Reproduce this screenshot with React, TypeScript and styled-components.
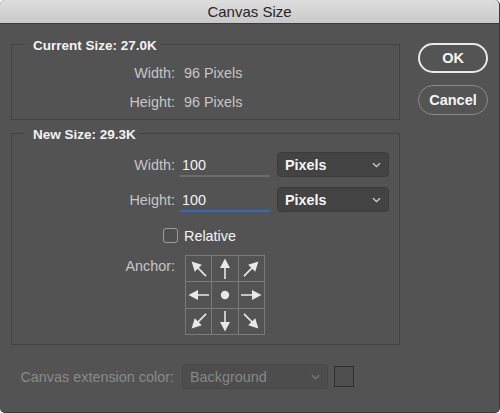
import styled, { createGlobalStyle } from "styled-components";

const GlobalStyle = createGlobalStyle`
    body {
        margin: 0;
        background: #ffffff;
        font-family: "Liberation Sans", Arial, sans-serif;
    }
`;

const Window = styled.div`
    width: 499px;
    height: 412px;
    background: #535353;
    border-right: 1px solid #3a3a3a;
    border-bottom: 1px solid #3a3a3a;
    border-radius: 5px;
    overflow: hidden;
    display: flex;
    flex-direction: column;
    font-size: 14.4px;
`;

const TitleBar = styled.div`
    height: 23px;
    flex-shrink: 0;
    border-bottom: 1px solid #3b3b3b;
    background: linear-gradient(#dedede, #c9c9c9);
    display: flex;
    align-items: center;
    justify-content: center;
    font-size: 15px;
    color: #262626;
`;

const Body = styled.div`
    display: flex;
    gap: 18px;
    padding: 10px 0 0 11px;
`;

const LeftColumn = styled.div`
    width: 389px;
    display: flex;
    flex-direction: column;
`;

const Group = styled.fieldset<{ $pad: string; $top?: number }>`
    margin: ${(p) => p.$top ?? 0}px 0 0 0;
    padding: ${(p) => p.$pad};
    border: 1px solid #434343;
    min-width: 0;
    display: flex;
    flex-direction: column;
`;

const Legend = styled.legend`
    margin-left: 13px;
    padding: 4px 3px 0 8px;
    font-size: 13.5px;
    font-weight: bold;
    line-height: 16px;
    color: #f2f2f2;
`;

const Row = styled.div<{ $height: number; $gap: number; $top?: number }>`
    display: grid;
    grid-template-columns: 163px auto 1fr;
    align-items: center;
    column-gap: ${(p) => p.$gap}px;
    height: ${(p) => p.$height}px;
    margin-top: ${(p) => p.$top ?? 0}px;
`;

const Label = styled.span<{ $dim?: boolean }>`
    text-align: right;
    white-space: nowrap;
    color: ${(p) => (p.$dim ? "#8a8a8a" : "#c6c6c6")};
`;

const Value = styled.span`
    color: #c6c6c6;
`;

const Field = styled.input<{ $focused?: boolean }>`
    box-sizing: border-box;
    width: 90px;
    height: 25px;
    padding: 2px 2px 0;
    background: transparent;
    border: none;
    border-bottom: 2px solid ${(p) => (p.$focused ? "#2e6cc4" : "#6c6c6c")};
    color: #f2f2f2;
    font: inherit;
    outline: none;
`;

const Controls = styled.div`
    display: flex;
    align-items: center;
    gap: 7px;
`;

const SelectBox = styled.div<{ $width: number; $disabled?: boolean }>`
    box-sizing: border-box;
    width: ${(p) => p.$width}px;
    height: 25px;
    padding: 0 7px 0 7px;
    background: ${(p) => (p.$disabled ? "#4d4d4d" : "#434343")};
    border: 1px solid ${(p) => (p.$disabled ? "#474747" : "#3c3c3c")};
    border-radius: 4px;
    display: flex;
    align-items: center;
    justify-content: space-between;
    color: ${(p) => (p.$disabled ? "#878787" : "#f4f4f4")};
    font-weight: ${(p) => (p.$disabled ? "normal" : "bold")};
`;

const CheckRow = styled.div`
    display: flex;
    align-items: center;
    gap: 6px;
    height: 25px;
    margin-top: 11px;
    padding-left: 151px;
    color: #f4f4f4;
`;

const Checkbox = styled.span`
    box-sizing: border-box;
    width: 15px;
    height: 15px;
    border: 1px solid #9c9c9c;
    border-radius: 3px;
    background: #505050;
`;

const AnchorRow = styled.div`
    display: flex;
    gap: 10px;
    margin-top: 7px;
`;

const AnchorLabel = styled(Label)`
    width: 163px;
    padding-top: 3px;
`;

const AnchorGrid = styled.div`
    box-sizing: border-box;
    width: 80px;
    height: 80px;
    padding: 1px;
    display: grid;
    grid-template-columns: repeat(3, 1fr);
    grid-template-rows: repeat(3, 1fr);
    gap: 1px;
    background: #7a7a7a;
`;

const AnchorCell = styled.div`
    background: #535353;
    display: flex;
    align-items: center;
    justify-content: center;
`;

const ExtensionRow = styled(Row)`
    grid-template-columns: 163px auto auto 1fr;
    & > :nth-child(3) {
        margin-left: -2px;
    }
`;

const Swatch = styled.span`
    box-sizing: border-box;
    width: 20px;
    height: 21px;
    border: 1px solid #2f2f2f;
    background: #4f4f4f;
`;

const RightColumn = styled.div`
    display: flex;
    flex-direction: column;
    gap: 12px;
    padding-top: 9px;
`;

const PillButton = styled.button<{ $primary?: boolean }>`
    box-sizing: border-box;
    width: 70px;
    height: 30px;
    border-radius: 15px;
    background: #545454;
    border: ${(p) => (p.$primary ? "2px solid #e9e9e9" : "1px solid #8b8b8b")};
    color: #f4f4f4;
    font-family: inherit;
    font-size: 14.5px;
    font-weight: bold;
    padding: 0;
`;

const Chevron = ({ color }: { color: string }) => (
    <svg width="9" height="6" viewBox="0 0 9 6">
        <path d="M1 1.2 L4.5 4.6 L8 1.2" fill="none" stroke={color} strokeWidth="1.3" />
    </svg>
);

const Arrow = ({ angle }: { angle: number }) => (
    <svg width="24" height="24" viewBox="0 0 24 24">
        <g transform={`rotate(${angle} 12 12)`} fill="#e8e8e8" stroke="#e8e8e8">
            <line x1="12" y1="22" x2="12" y2="9" strokeWidth="1.6" />
            <polygon points="12,1.5 7,11 17,11" stroke="none" />
        </g>
    </svg>
);

const anchors: (number | null)[] = [-45, 0, 45, -90, null, 90, -135, 180, 135];

export default function App() {
    return (
        <>
            <GlobalStyle />
            <Window>
                <TitleBar>Canvas Size</TitleBar>
                <Body>
                    <LeftColumn>
                        <Group $pad="4px 0 3px">
                            <Legend>Current Size: 27.0K</Legend>
                            <Row $height={29} $gap={9}>
                                <Label>Width:</Label>
                                <Value>96 Pixels</Value>
                            </Row>
                            <Row $height={29} $gap={9}>
                                <Label>Height:</Label>
                                <Value>96 Pixels</Value>
                            </Row>
                        </Group>
                        <Group $pad="9px 0 9px" $top={3}>
                            <Legend>New Size: 29.3K</Legend>
                            <Row $height={25} $gap={5}>
                                <Label>Width:</Label>
                                <Controls>
                                    <Field defaultValue="100" />
                                    <SelectBox $width={112}>
                                        Pixels
                                        <Chevron color="#d0d0d0" />
                                    </SelectBox>
                                </Controls>
                            </Row>
                            <Row $height={25} $gap={5} $top={10}>
                                <Label>Height:</Label>
                                <Controls>
                                    <Field defaultValue="100" $focused />
                                    <SelectBox $width={112}>
                                        Pixels
                                        <Chevron color="#d0d0d0" />
                                    </SelectBox>
                                </Controls>
                            </Row>
                            <CheckRow>
                                <Checkbox />
                                Relative
                            </CheckRow>
                            <AnchorRow>
                                <AnchorLabel>Anchor:</AnchorLabel>
                                <AnchorGrid>
                                    {anchors.map((a, i) => (
                                        <AnchorCell key={i}>
                                            {a === null ? (
                                                <svg width="10" height="10" viewBox="0 0 10 10">
                                                    <circle cx="5" cy="5" r="4.2" fill="#e8e8e8" />
                                                </svg>
                                            ) : (
                                                <Arrow angle={a} />
                                            )}
                                        </AnchorCell>
                                    ))}
                                </AnchorGrid>
                            </AnchorRow>
                        </Group>
                        <ExtensionRow $height={24} $gap={8} $top={19}>
                            <Label $dim>Canvas extension color:</Label>
                            <SelectBox $width={146} $disabled>
                                Background
                                <Chevron color="#7a7a7a" />
                            </SelectBox>
                            <Swatch />
                        </ExtensionRow>
                    </LeftColumn>
                    <RightColumn>
                        <PillButton $primary>OK</PillButton>
                        <PillButton>Cancel</PillButton>
                    </RightColumn>
                </Body>
            </Window>
        </>
    );
}
